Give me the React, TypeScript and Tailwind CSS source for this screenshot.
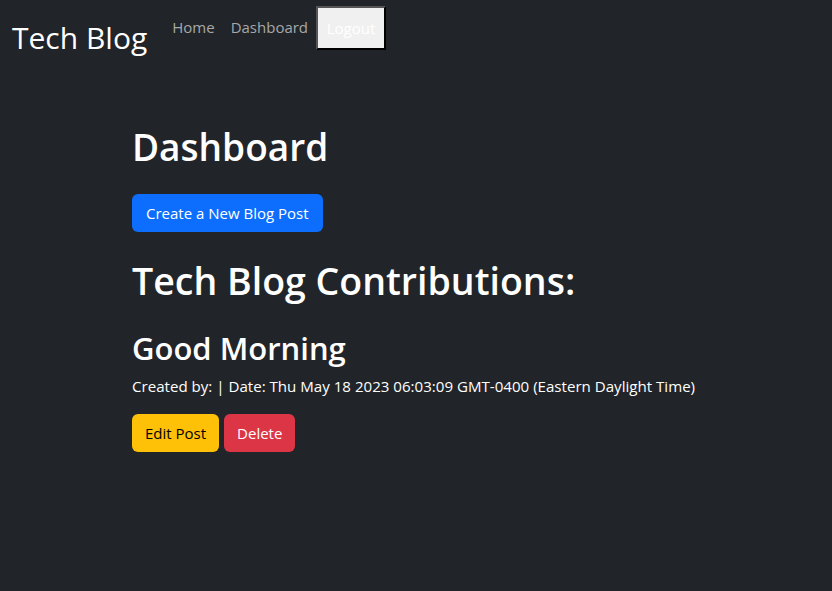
export default function App() {
  return (
    <div className="min-h-[591px] bg-[#212529] text-white font-['Open_Sans',sans-serif]">
      <nav className="flex items-start">
        <a className="pl-3 pt-[16px] text-[30px] leading-[44px] text-white">Tech Blog</a>
        <div className="flex items-start pl-[17px] pt-[6px]">
          <a className="mt-[9px] px-[8px] text-[15px] leading-[24px] text-[#a6a8aa]">Home</a>
          <a className="mt-[9px] px-[8px] text-[15px] leading-[24px] text-[#a6a8aa]">Dashboard</a>
          <button className="h-[44px] w-[70px] border-2 border-t-[#555] border-l-[#555] border-r-black border-b-black bg-[#f0f0f0] text-[15px] text-white">
            Logout
          </button>
        </div>
      </nav>

      <main className="pl-[132px] pt-[64px]">
        <h1 className="text-[37px] font-semibold leading-[46px]">Dashboard</h1>
        <button className="mt-[24px] h-[38px] rounded-md bg-[#0d6efd] px-[14px] text-[15px] text-white">
          Create a New Blog Post
        </button>
        <h2 className="mt-[18px] text-[37.5px] font-semibold leading-[62px]">Tech Blog Contributions:</h2>
        <h3 className="mt-[15px] text-[31px] font-semibold leading-[42px]">Good Morning</h3>
        <p className="mt-[5px] text-[15.1px] leading-[24px]">
          Created by: | Date: Thu May 18 2023 06:03:09 GMT-0400 (Eastern Daylight Time)
        </p>
        <div className="mt-[16px] flex gap-[5px]">
          <button className="h-[38px] rounded-md bg-[#ffc107] px-[13px] text-[15px] text-black">Edit Post</button>
          <button className="h-[38px] rounded-md bg-[#dc3545] px-[13px] text-[15px] text-white">Delete</button>
        </div>
      </main>
    </div>
  );
}
